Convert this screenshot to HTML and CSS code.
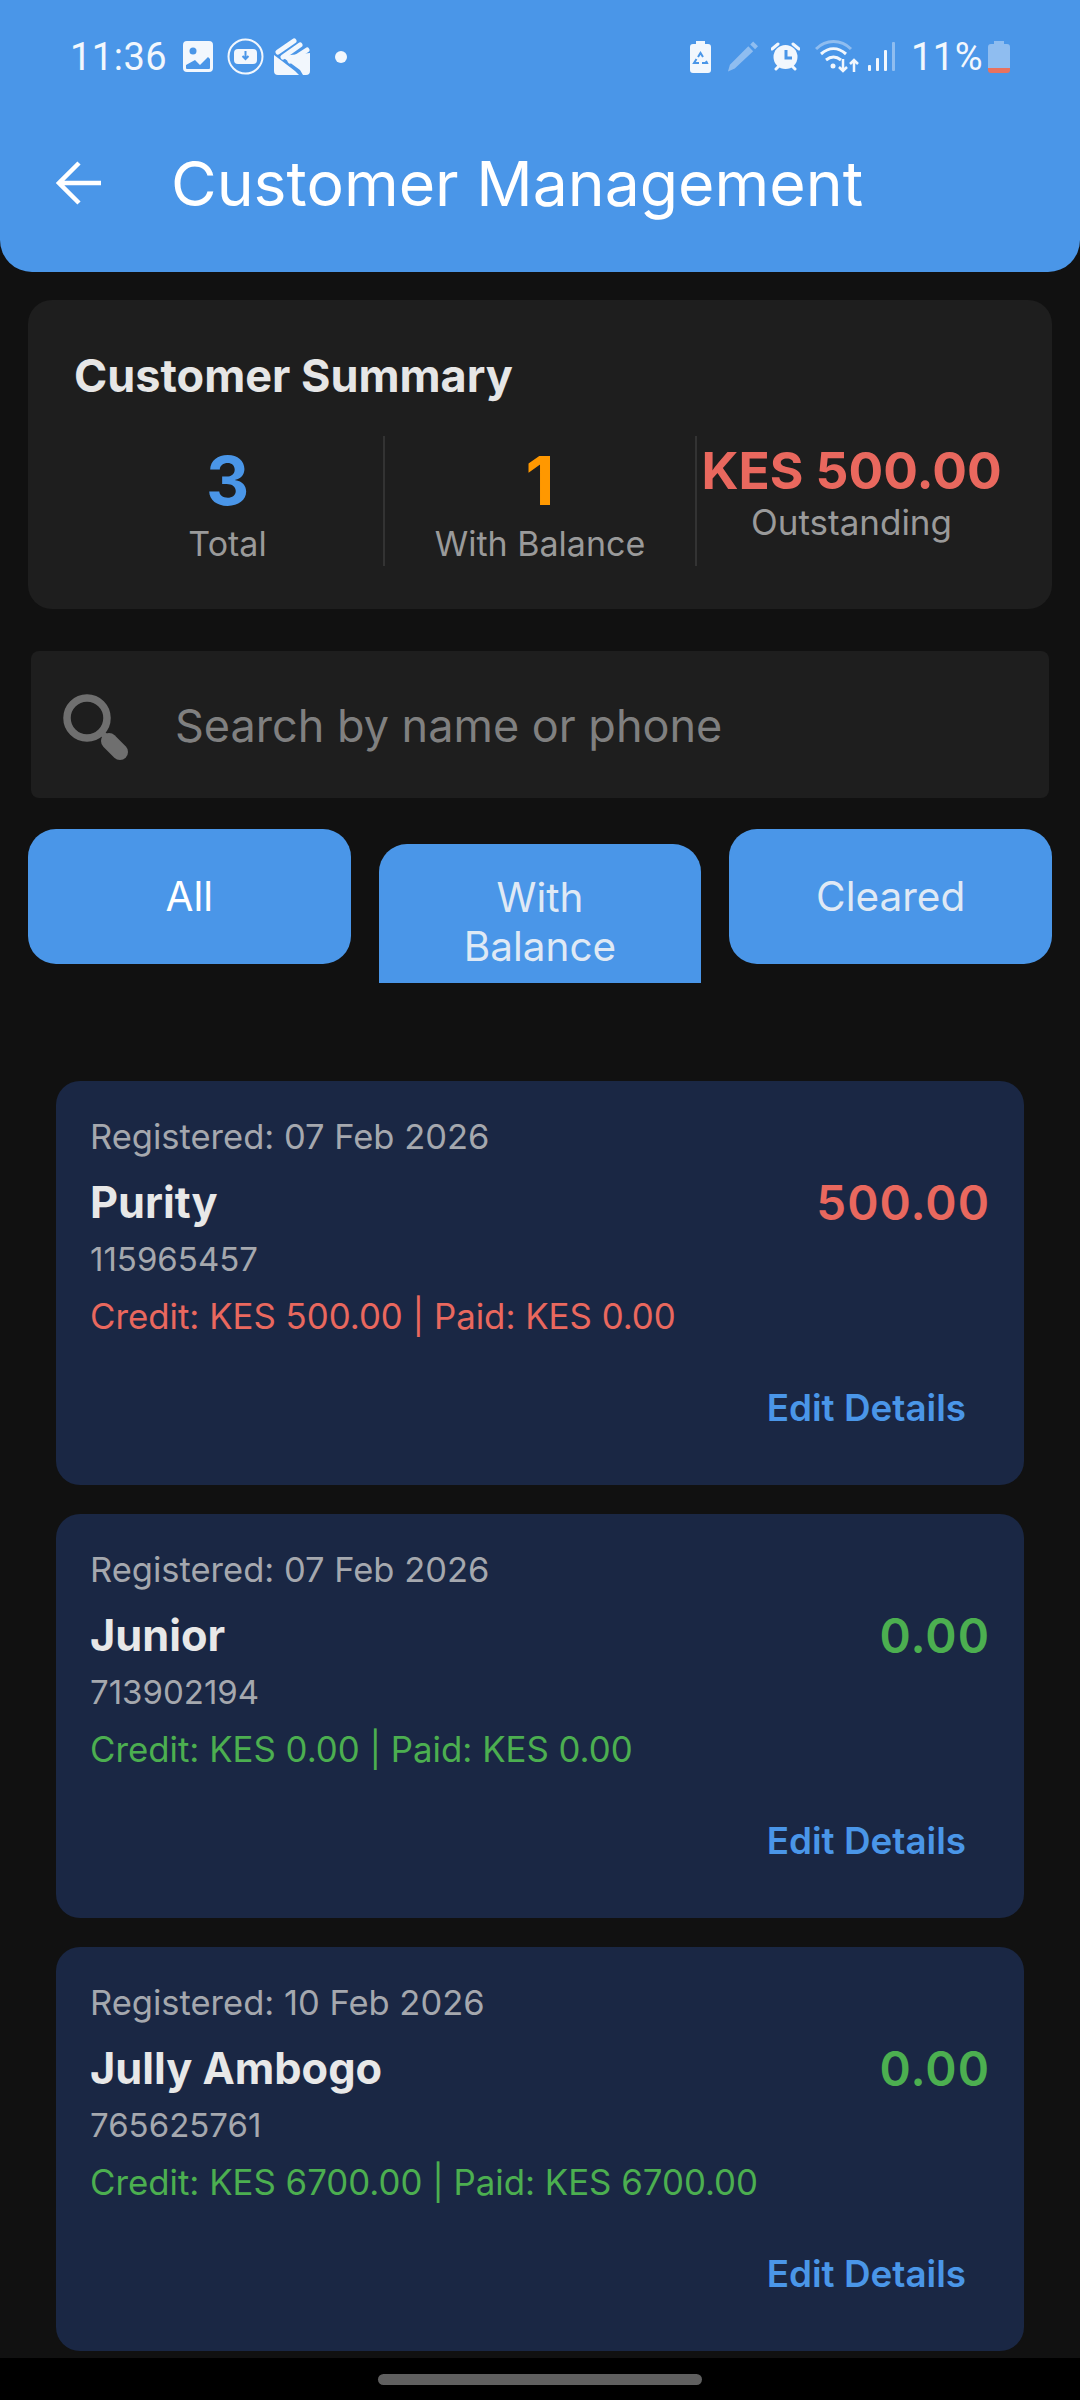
FILE: index.html
```html
<!DOCTYPE html>
<html lang="en">
<head>
    <meta charset="UTF-8">
    <meta name="viewport" content="width=device-width, initial-scale=1.0">
    <title>Customer Management</title>
    <link rel="stylesheet" href="styles.css">
</head>
<body>
    <div class="screen">
        <header class="app-header">
            <div class="status-bar">
                <div class="status-left">
                    <span class="clock">11:36</span>
                    <svg class="icon-gallery" width="30" height="31" viewBox="0 0 30 31"><path fill-rule="evenodd" fill="#f2f7fd" d="M4 0h22a4 4 0 0 1 4 4v23a4 4 0 0 1-4 4H4a4 4 0 0 1-4-4V4a4 4 0 0 1 4-4zM3 24v3a1 1 0 0 0 1 1h22a1 1 0 0 0 1-1v-9l-2-2-8 8-5-5z"/><circle cx="10" cy="10" r="3.500" fill="#4a96e8"/></svg>
                    <svg class="icon-download" width="37" height="37" viewBox="0 0 37 37"><circle cx="18.500" cy="18.500" r="17" fill="none" stroke="#f2f7fd" stroke-width="2"/><rect x="7" y="11" width="23" height="15" rx="4" fill="#f2f7fd"/><path d="M18.500 13v7M15.500 18l3 3 3-3" fill="none" stroke="#4a96e8" stroke-width="2"/></svg>
                    <svg class="icon-app" width="36" height="37" viewBox="0 0 36 37"><path fill="#f2f7fd" d="M0 17l8 6 13 10 4 4H4a4 4 0 0 1-4-4zM36 15v18a4 4 0 0 1-4 4h-3l-3-5-19-14z"/><path d="M4 14L20 3M9 19L26 7M16 23L33 12" stroke="#f2f7fd" stroke-width="5" stroke-linecap="round"/></svg>
                    <span class="status-dot"></span>
                </div>
                <div class="status-right">
                    <svg class="icon-recycle" width="21" height="32" viewBox="0 0 21 32"><path fill="#f2f7fd" d="M6 0h9v3h3a3 3 0 0 1 3 3v23a3 3 0 0 1-3 3H3a3 3 0 0 1-3-3V6a3 3 0 0 1 3-3h3z"/><path d="M8 16l2.500-4 2.500 4M16 20l1 2h-5M9 22H4l2.500-4" fill="none" stroke="#4a96e8" stroke-width="2"/></svg>
                    <svg class="icon-pencil" width="31" height="31" viewBox="0 0 32 31"><path fill="#8fbdf0" d="M22 5l5 5L8 28l-7 3 2-7zM24 3l3-3 5 5-3 3z"/></svg>
                    <svg class="icon-alarm" width="29" height="29" viewBox="0 0 29 29"><circle cx="14.500" cy="15" r="12" fill="#f2f7fd"/><path d="M1 7l6-5M28 7l-6-5M5 27l3-3M24 27l-3-3" stroke="#f2f7fd" stroke-width="3" stroke-linecap="round"/><path d="M15 8v8h6" fill="none" stroke="#4a96e8" stroke-width="3"/></svg>
                    <svg class="icon-wifi" width="44" height="33" viewBox="0 0 44 33"><path d="M1 9C11-1 26-1 36 9" fill="none" stroke="#8fbdf0" stroke-width="3"/><path d="M6 14c8-7 17-7 25 0M11 20c5-4 10-4 15 0" fill="none" stroke="#f2f7fd" stroke-width="3"/><circle cx="18" cy="26" r="2.500" fill="#f2f7fd"/><path d="M28 19v12M24 27l4 4 4-4M39 32V20M35 24l4-4 4 4" fill="none" stroke="#f2f7fd" stroke-width="2.500"/></svg>
                    <svg class="icon-signal" width="27" height="29" viewBox="0 0 27 29"><rect x="0" y="23" width="3" height="6" rx="1" fill="#f2f7fd"/><rect x="8" y="16" width="3" height="13" rx="1" fill="#f2f7fd"/><rect x="16" y="8" width="3" height="21" rx="1" fill="#f2f7fd"/><rect x="24" y="0" width="3" height="29" rx="1" fill="#8fbdf0"/></svg>
                    <span class="battery-text">11%</span>
                    <svg class="icon-battery" width="22" height="32" viewBox="0 0 22 32"><path fill="#8fbdf0" d="M6 0h10v3h3a3 3 0 0 1 3 3v21H0V6a3 3 0 0 1 3-3h3z"/><path fill="#e9725f" d="M0 27h22v2a3 3 0 0 1-3 3H3a3 3 0 0 1-3-3z"/></svg>
                </div>
            </div>
            <div class="toolbar">
                <svg class="back-icon" width="46" height="46" viewBox="0 0 46 46"><path d="M45 23H4M23 3L3 23l20 20" fill="none" stroke="#fff" stroke-width="4.500"/></svg>
                <h1>Customer Management</h1>
            </div>
        </header>

        <section class="summary-card">
            <h2>Customer Summary</h2>
            <div class="summary-row">
                <div class="stat">
                    <div class="stat-value stat-blue">3</div>
                    <div class="stat-label">Total</div>
                </div>
                <div class="stat stat-divided">
                    <div class="stat-value stat-orange">1</div>
                    <div class="stat-label">With Balance</div>
                </div>
                <div class="stat stat-divided stat-money">
                    <div class="stat-value stat-red">KES 500.00</div>
                    <div class="stat-label">Outstanding</div>
                </div>
            </div>
        </section>

        <div class="search-box">
            <svg class="search-icon" width="68" height="68" viewBox="0 0 68 68"><circle cx="25" cy="25" r="20" fill="none" stroke="#6f6f6f" stroke-width="7.500"/><path d="M39 39l8 8" stroke="#6f6f6f" stroke-width="6"/><path d="M47 48l11 11" stroke="#6f6f6f" stroke-width="16" stroke-linecap="round"/></svg>
            <span class="search-hint">Search by name or phone</span>
        </div>

        <div class="filters">
            <div class="chip chip-active">All</div>
            <div class="chip chip-wrap">With<br>Balance</div>
            <div class="chip">Cleared</div>
        </div>

        <main class="customer-list">
            <article class="customer-card">
                <div class="registered">Registered: 07 Feb 2026</div>
                <div class="name-row">
                    <span class="name">Purity</span>
                    <span class="amount text-red">500.00</span>
                </div>
                <div class="phone">115965457</div>
                <div class="credit text-red">Credit: KES 500.00 | Paid: KES 0.00</div>
                <div class="card-actions"><span class="edit-link">Edit Details</span></div>
            </article>
            <article class="customer-card">
                <div class="registered">Registered: 07 Feb 2026</div>
                <div class="name-row">
                    <span class="name">Junior</span>
                    <span class="amount text-green">0.00</span>
                </div>
                <div class="phone">713902194</div>
                <div class="credit text-green">Credit: KES 0.00 | Paid: KES 0.00</div>
                <div class="card-actions"><span class="edit-link">Edit Details</span></div>
            </article>
            <article class="customer-card">
                <div class="registered">Registered: 10 Feb 2026</div>
                <div class="name-row">
                    <span class="name">Jully Ambogo</span>
                    <span class="amount text-green">0.00</span>
                </div>
                <div class="phone">765625761</div>
                <div class="credit text-green">Credit: KES 6700.00 | Paid: KES 6700.00</div>
                <div class="card-actions"><span class="edit-link">Edit Details</span></div>
            </article>
        </main>

        <div class="nav-bar"><span class="nav-pill"></span></div>
    </div>
</body>
</html>
```

FILE: styles.css
```css
* {
    box-sizing: border-box;
}
body {
    font-family: 'Inter', 'Noto Sans', sans-serif;
    margin: 0;
    background-color: #111111;
}
.screen {
    width: 1080px;
    height: 2400px;
    overflow: hidden;
    display: flex;
    flex-direction: column;
    background-color: #111111;
}
.app-header {
    height: 272px;
    flex-shrink: 0;
    background-color: #4a96e8;
    border-radius: 0 0 32px 32px;
    color: white;
}
.status-bar {
    height: 75px;
    padding: 38px 70px 0 70px;
    display: flex;
    justify-content: space-between;
    align-items: center;
}
.status-left, .status-right {
    display: flex;
    align-items: center;
}
.clock {
    font-family: 'Roboto', sans-serif;
    font-size: 38px;
    width: 113px;
    color: #f2f7fd;
    letter-spacing: 0.5px;
}
.icon-download {
    margin-left: 14px;
}
.icon-app {
    margin-left: 10px;
}
.status-dot {
    width: 12px;
    height: 12px;
    margin-left: 25px;
    border-radius: 50%;
    background-color: #f2f7fd;
}
.icon-pencil {
    margin-left: 16px;
}
.icon-alarm {
    margin-left: 13px;
}
.icon-wifi {
    margin-left: 15px;
}
.icon-signal {
    margin-left: 9px;
}
.battery-text {
    font-family: 'Roboto', sans-serif;
    font-size: 38px;
    width: 70px;
    margin-left: 16px;
    color: #f2f7fd;
    letter-spacing: 0.5px;
}
.icon-battery {
    margin-left: 7px;
}
.toolbar {
    display: flex;
    align-items: center;
    padding: 71px 0 0 56px;
}
.back-icon {
    flex-shrink: 0;
}
.toolbar h1 {
    margin: 0 0 0 69px;
    font-size: 62.5px;
    line-height: 74px;
    font-weight: 400;
    white-space: nowrap;
}
.summary-card {
    height: 309px;
    margin: 28px 28px 0;
    padding: 48px 46px 0;
    flex-shrink: 0;
    background-color: #1e1e1e;
    border-radius: 24px;
}
.summary-card h2 {
    margin: 0;
    font-size: 45px;
    line-height: 56px;
    font-weight: 700;
    color: #e6e6e6;
}
.summary-row {
    display: grid;
    grid-template-columns: 311px 312px 1fr;
    margin: 32px 0 0 -2px;
    height: 129px;
}
.stat {
    text-align: center;
    padding-top: 9px;
}
.stat-divided {
    border-left: 2px solid #333333;
}
.stat-value {
    font-size: 67px;
    line-height: 72px;
    font-weight: 700;
}
.stat-label {
    font-size: 34px;
    line-height: 44px;
    color: #9a9a9a;
    margin-top: 5px;
}
.stat-money {
    padding-top: 3px;
}
.stat-money .stat-value {
    font-size: 51.5px;
    line-height: 62px;
    white-space: nowrap;
}
.stat-money .stat-label {
    font-size: 35px;
    margin-top: -1px;
}
.stat-blue {
    color: #4a96e8;
}
.stat-orange {
    color: #ff9800;
}
.stat-red {
    color: #e9685e;
}
.search-box {
    height: 147px;
    margin: 42px 31px 0;
    padding-left: 31px;
    flex-shrink: 0;
    display: flex;
    align-items: center;
    background-color: #1e1e1e;
    border-radius: 8px;
}
.search-icon {
    flex-shrink: 0;
    margin-top: 4px;
}
.search-hint {
    margin: 2px 0 0 45px;
    font-size: 45px;
    color: #808080;
}
.filters {
    display: flex;
    align-items: flex-start;
    gap: 28px;
    height: 154px;
    margin: 31px 28px 0;
    flex-shrink: 0;
}
.chip {
    flex: 1;
    height: 135px;
    display: flex;
    align-items: center;
    justify-content: center;
    text-align: center;
    font-size: 40.5px;
    line-height: 49px;
    color: #dfe9f5;
    background-color: #4a96e8;
    border-radius: 28px;
}
.chip-active {
    color: white;
}
.chip-wrap {
    margin-top: 15px;
    height: 139px;
    align-items: flex-start;
    padding-top: 29px;
    border-radius: 28px 28px 0 0;
}
.customer-list {
    display: flex;
    flex-direction: column;
    gap: 29px;
    padding: 98px 56px 0;
    flex: 1;
}
.customer-card {
    height: 404px;
    padding: 33px 34px 0 34px;
    background-color: #1a2744;
    border-radius: 24px;
}
.registered {
    font-size: 34.5px;
    line-height: 46px;
    color: #a5a8ae;
}
.name-row {
    display: flex;
    justify-content: space-between;
    align-items: center;
    margin-top: 13px;
    height: 58px;
}
.name {
    font-size: 43.3px;
    font-weight: 700;
    color: #e8e8e8;
}
.amount {
    font-size: 47.5px;
    font-weight: 600;
    letter-spacing: 1px;
}
.phone {
    font-size: 33px;
    line-height: 46px;
    margin-top: 5px;
    color: #a5a8ae;
}
.credit {
    font-size: 34.8px;
    line-height: 46px;
    margin-top: 11px;
}
.text-red {
    color: #e9685e;
}
.text-green {
    color: #4caf50;
}
.card-actions {
    display: flex;
    justify-content: flex-end;
    margin-top: 46px;
    padding-right: 24px;
}
.edit-link {
    font-size: 36.8px;
    line-height: 46px;
    font-weight: 600;
    color: #4a96e8;
}
.nav-bar {
    height: 42px;
    flex-shrink: 0;
    padding-top: 16px;
    display: flex;
    justify-content: center;
    align-items: flex-start;
    background-color: black;
}
.nav-pill {
    width: 324px;
    height: 11px;
    background-color: #606060;
    border-radius: 6px;
}
```
